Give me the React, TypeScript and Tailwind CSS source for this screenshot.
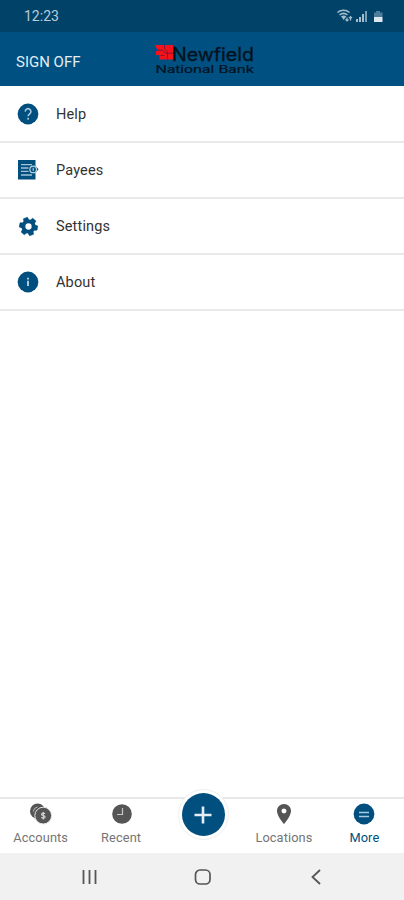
import { useState } from "react";
import { MdLocationOn } from "react-icons/md";

const GEAR_TEETH = [-20, 40, 100, 160, 220, 280];

function HelpIcon() {
  return (
    <svg viewBox="0 0 22 22" className="size-[22px]">
      <circle cx="11" cy="11" r="10.4" fill="currentColor" />
      <path d="M8.3 8.6a2.8 2.8 0 1 1 4.4 2.2c-1 .7-1.6 1.2-1.6 2.4" fill="none" stroke="#a9cbe0" strokeWidth="1.6" />
      <circle cx="11.1" cy="15.8" r="1" fill="#a9cbe0" />
    </svg>
  );
}

function PayeesIcon() {
  return (
    <svg viewBox="0 0 22 22" className="size-[22px]">
      <path d="M1 1h17.5v5.7l3 3.6-3 3.8V20.5H1z" fill="currentColor" />
      <path d="M4 5.6h11M4 9h7.5M4 12.4h7.5M4 16h11" stroke="#a3c3d6" strokeWidth="1.3" />
      <circle cx="16.2" cy="10.4" r="3.3" fill="currentColor" stroke="#b5cfdf" strokeWidth="1.3" />
      <path d="M16.2 8.8v3.2" stroke="#b5cfdf" strokeWidth="1.1" />
    </svg>
  );
}

function SettingsIcon() {
  return (
    <svg viewBox="0 0 22 22" className="size-[21px]">
      {GEAR_TEETH.map((angle) => (
        <path
          key={angle}
          d="M8 6 8.8 1.6h4.4L14 6z"
          transform={`rotate(${angle} 11 11)`}
          fill="currentColor"
          stroke="currentColor"
          strokeWidth="0.6"
          strokeLinejoin="round"
        />
      ))}
      <circle cx="11" cy="11" r="5.3" fill="none" stroke="currentColor" strokeWidth="4" />
    </svg>
  );
}

function AboutIcon() {
  return (
    <svg viewBox="0 0 22 22" className="size-[22px]">
      <circle cx="11" cy="11" r="10.4" fill="currentColor" />
      <path d="M11 6.8v1.8M11 9.8v5.2" stroke="#a9cbe0" strokeWidth="2" />
    </svg>
  );
}

function AccountsIcon() {
  return (
    <svg viewBox="0 0 24 22" className="ml-0.5 h-[22px] w-6">
      <circle cx="8.6" cy="8.2" r="7.6" fill="currentColor" />
      <path d="M4.3 8.6a5 5 0 0 1 4.2-4.6" fill="none" stroke="#b8b8b8" strokeWidth="1" />
      <circle cx="14.2" cy="12.6" r="8.4" fill="currentColor" stroke="#e6e6e6" strokeWidth="1" />
      <path
        d="M16 10.8c-.5-.8-3.4-1-3.4.6s3.5.9 3.5 2.6c0 1.5-3 1.4-3.7.4M14.3 8.9v7.6"
        fill="none"
        stroke="#d4d4d4"
        strokeWidth="1.2"
      />
    </svg>
  );
}

function RecentIcon() {
  return (
    <svg viewBox="0 0 22 22" className="ml-0.5 size-[22px]">
      <circle cx="11" cy="11" r="9.8" fill="currentColor" />
      <path d="M11.5 5v6.5H6" fill="none" stroke="#c8c8c8" strokeWidth="1.2" />
    </svg>
  );
}

function LocationsIcon() {
  return <MdLocationOn className="ml-px size-6" />;
}

function MoreIcon() {
  return (
    <svg viewBox="0 0 22 22" className="ml-px size-[22px]">
      <circle cx="11" cy="11" r="10.4" fill="currentColor" />
      <path d="M6 9.5h10M6 13.5h10" stroke="#a9cbe0" strokeWidth="1.4" />
    </svg>
  );
}

function BankMark() {
  return (
    <svg viewBox="0 0 18 16" className="-mt-1 h-4 w-[18px] shrink-0">
      <path d="M0 1h18v14.5H4.5V11H1V7h2z" fill="#f5121d" />
      <path d="M2 6.2h5.5l3 3H18M9.5 1v4l3 2.8v7.7M5.5 11.5h4" fill="none" stroke="#7d1830" strokeWidth="1" />
    </svg>
  );
}

function BankLogo() {
  return (
    <div className="w-[100px] font-['Inter','Liberation_Sans',sans-serif] text-[#03121d]">
      <div className="flex h-[19px] items-center">
        <BankMark />
        <svg viewBox="0 0 82 19" className="h-[19px] w-[82px] overflow-visible">
          <text
            x="-1"
            y="15.5"
            textLength="82"
            lengthAdjust="spacingAndGlyphs"
            fill="currentColor"
            stroke="currentColor"
            strokeWidth="0.3"
            className="text-[18px]"
          >
            Newfield
          </text>
        </svg>
      </div>
      <svg viewBox="0 0 100 12" className="mt-0.5 h-3 w-[100px] overflow-visible">
        <text
          x="0.5"
          y="7"
          textLength="98.5"
          lengthAdjust="spacingAndGlyphs"
          fill="currentColor"
          stroke="currentColor"
          strokeWidth="0.2"
          className="text-[10px]"
        >
          National Bank
        </text>
      </svg>
    </div>
  );
}

function StatusIcons() {
  return (
    <svg viewBox="0 0 50 16" className="h-4 w-[50px] text-[#a5bece]">
      <path d="M1.5 4.5c3.5-3 8.5-3 12 0M3.5 7c2.500-2 5.500-2 8 0" fill="none" stroke="currentColor" strokeWidth="1.6" />
      <path d="M5 8.3 7.7 12l2.6-3.7c-1.5-1-3.6-1-5.3 0z" fill="currentColor" />
      <path
        d="M11 9.5v3M9.5 11.5 11 13l1.5-1.5M14.5 12.5V9M13 10.2l1.5-1.5 1.5 1.5"
        fill="none"
        stroke="currentColor"
        strokeWidth="1.2"
      />
      <path d="M20 11h2v3h-2zM23 9h2v5h-2zM26 6h2v8h-2z" fill="currentColor" />
      <path d="M29 3h2v11h-2z" fill="#7c9fb6" />
      <path d="M38 4.5h2V3h4v1.5h2.5V9H38z" fill="#4c7d9b" />
      <path d="M38 9h8.5v5H38z" fill="#dde8ee" />
    </svg>
  );
}

const MENU = [
  { label: "Help", icon: HelpIcon },
  { label: "Payees", icon: PayeesIcon },
  { label: "Settings", icon: SettingsIcon },
  { label: "About", icon: AboutIcon },
];

const LEFT_TABS = [
  { label: "Accounts", icon: AccountsIcon },
  { label: "Recent", icon: RecentIcon },
];

const RIGHT_TABS = [
  { label: "Locations", icon: LocationsIcon },
  { label: "More", icon: MoreIcon },
];

type TabProps = {
  label: string;
  icon: () => React.ReactNode;
  active: boolean;
  onSelect: () => void;
};

function Tab({ label, icon: Icon, active, onSelect }: TabProps) {
  return (
    <button
      onClick={onSelect}
      className={`flex flex-1 basis-0 flex-col items-center pt-[3px] ${
        active ? "text-[#004f7f]" : "text-[#555555]"
      }`}
    >
      <span className="flex h-6 items-center">
        <Icon />
      </span>
      <span className={`mt-1 pl-px text-[12.8px] leading-4 tracking-[0.1px] ${active ? "" : "text-[#757575]"}`}>
        {label}
      </span>
    </button>
  );
}

export default function App() {
  const [tab, setTab] = useState("More");

  return (
    <div className="flex h-screen w-full flex-col bg-white font-['Roboto','Liberation_Sans',sans-serif]">
      {/* Status bar */}
      <div className="flex h-8 shrink-0 items-center justify-between bg-[#014269] pl-6 pr-[18px]">
        <span className="text-sm text-[#b9ccd9]">12:23</span>
        <StatusIcons />
      </div>

      {/* Header */}
      <header className="grid h-[54px] shrink-0 grid-cols-[1fr_100px_1fr] items-center bg-[#005081]">
        <button className="pl-4 pt-[6px] text-left text-[15px] text-[#e2edf4]">SIGN OFF</button>
        <div className="pl-[3px] pt-1">
          <BankLogo />
        </div>
      </header>

      {/* Menu */}
      <main className="flex-1 pt-px">
        {MENU.map(({ label, icon: Icon }) => (
          <button
            key={label}
            className="flex h-14 w-full items-center border-b-2 border-[#e9e9e9] pl-[17px] text-left"
          >
            <span className="flex w-[22px] justify-center text-[#004f7f]">
              <Icon />
            </span>
            <span className="ml-[17px] pt-px text-[14.5px] tracking-[0.15px] text-[#333333]">{label}</span>
          </button>
        ))}
      </main>

      {/* Tab bar */}
      <nav className="flex h-14 shrink-0 border-t-2 border-[#e8e8e8] bg-white">
        {LEFT_TABS.map((t) => (
          <Tab key={t.label} {...t} active={tab === t.label} onSelect={() => setTab(t.label)} />
        ))}
        <div className="flex flex-1 basis-0 justify-center pl-0.5">
          <button className="-mt-[10px] flex size-[51px] shrink-0 items-center justify-center rounded-full border border-[#efefef] bg-white">
            <span className="flex size-[43px] items-center justify-center rounded-full bg-[#004f7f]">
              <svg viewBox="0 0 20 20" className="size-5">
                <path d="M10 1.5v17M1.5 10h17" stroke="#e4eef4" strokeWidth="2.6" />
              </svg>
            </span>
          </button>
        </div>
        {RIGHT_TABS.map((t) => (
          <Tab key={t.label} {...t} active={tab === t.label} onSelect={() => setTab(t.label)} />
        ))}
      </nav>

      {/* System navigation */}
      <div className="flex h-[47px] shrink-0 items-center justify-center bg-[#f1f1f1] text-[#555555]">
        <svg viewBox="0 0 242 20" className="h-5 w-[242px]" fill="none" stroke="currentColor">
          <path d="M2.5 3v14M8.5 3v14M14.5 3v14" strokeWidth="1.8" />
          <rect x="114.5" y="3" width="14.5" height="14" rx="4.5" strokeWidth="1.7" />
          <path d="m239 3-7.5 7 7.5 7" strokeWidth="1.8" />
        </svg>
      </div>
    </div>
  );
}
